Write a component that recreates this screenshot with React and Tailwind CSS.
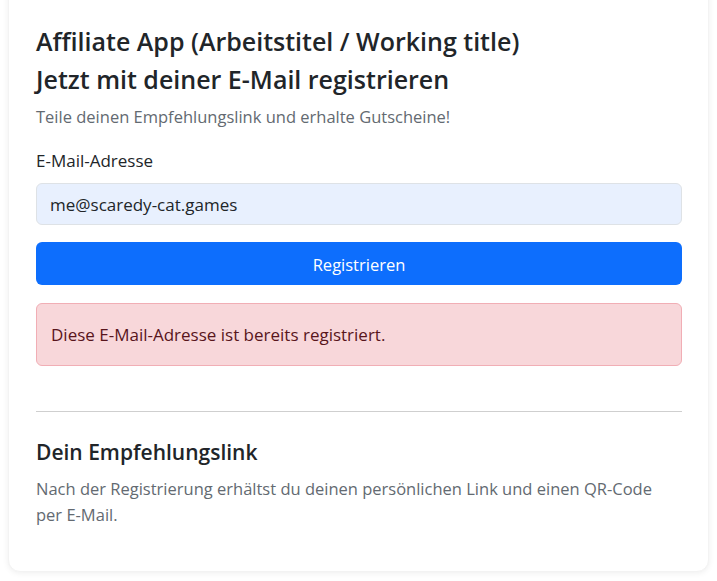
import { useState } from 'react';

export default function App() {
  const [email, setEmail] = useState('me@scaredy-cat.games');

  return (
    <div className="min-h-screen bg-white px-2 pb-[11px] overflow-hidden" style={{ fontFamily: '"Open Sans", "Noto Sans", sans-serif' }}>
      <div className="-mt-4 bg-white rounded-xl border border-[#f3f3f3] shadow-[0_1px_6px_rgba(0,0,0,0.07)] pl-[27px] pr-[26px] pt-[37px] pb-[43px]">
        <h1 className="text-[25px] leading-[38px] font-semibold text-[#212529]">Affiliate App (Arbeitstitel / Working title)</h1>
        <h2 className="text-[25px] leading-[38px] font-semibold text-[#212529]">Jetzt mit deiner E-Mail registrieren</h2>
        <p className="mt-[7px] text-[16.5px] leading-[24px] text-[#636a71]">Teile deinen Empfehlungslink und erhalte Gutscheine!</p>

        <form className="mt-[20px]" onSubmit={(e) => e.preventDefault()}>
          <label className="block text-[17px] leading-[24px] text-[#212529]">E-Mail-Adresse</label>
          <input
            type="email"
            value={email}
            onChange={(e) => setEmail(e.target.value)}
            className="mt-[10px] block w-full h-[42px] px-[13px] rounded-md border border-[#dee2e6] bg-[#e8f0fe] text-[17px] text-[#212529] outline-none"
          />
          <button type="submit" className="mt-[17px] w-full h-[43px] pt-[3px] rounded-md bg-[#0d6efd] text-white text-[16.5px]">
            Registrieren
          </button>
        </form>

        <div className="mt-[18px] h-[63px] flex items-center px-[14px] rounded-md border border-[#f1aeb5] bg-[#f8d7da] text-[#58151c] text-[17px]">
          Diese E-Mail-Adresse ist bereits registriert.
        </div>

        <hr className="mt-[45px] border-0 border-t border-[#cfcfcf]" />

        <h3 className="mt-[26px] text-[21px] leading-[28px] font-semibold text-[#212529]">Dein Empfehlungslink</h3>
        <p className="mt-[10px] text-[16.5px] leading-[26px] text-[#636a71]">
          Nach der Registrierung erhältst du deinen persönlichen Link und einen QR-Code per E-Mail.
        </p>
      </div>
    </div>
  );
}
